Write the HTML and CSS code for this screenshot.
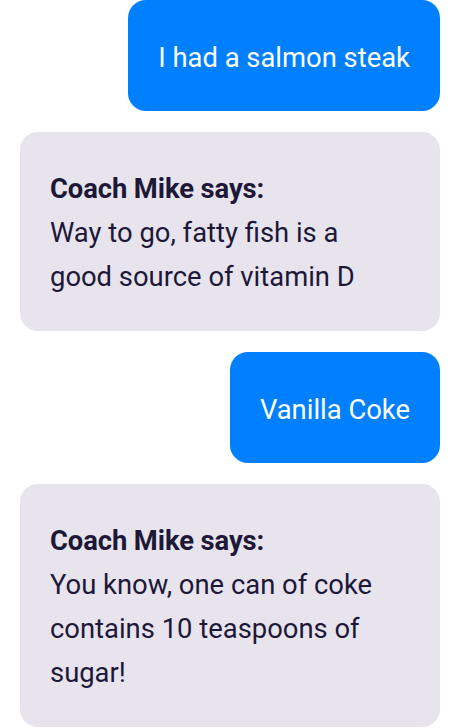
FILE: index.html
```html
<!DOCTYPE html>
<html>
<head>
<meta charset="utf-8">
<link rel="stylesheet" href="styles.css">
</head>
<body>
<div class="chat">
  <div class="msg user">I had a salmon steak</div>
  <div class="msg coach"><strong>Coach Mike says:</strong><br>Way to go, fatty fish is a good source of vitamin D</div>
  <div class="msg user">Vanilla Coke</div>
  <div class="msg coach"><strong>Coach Mike says:</strong><br>You know, one can of coke contains 10 teaspoons of sugar!</div>
</div>
</body>
</html>
```
FILE: styles.css
```css
html, body {
  margin: 0;
  padding: 0;
  background: #ffffff;
}
body {
  font-family: Roboto, "Noto Sans", sans-serif;
}
.chat {
  display: flex;
  flex-direction: column;
  align-items: flex-end;
  gap: 21px;
  padding: 0 20px;
}
.msg {
  box-sizing: border-box;
  border-radius: 18px;
  font-size: 27.4px;
  line-height: 44px;
}
.user {
  background: #0080ff;
  color: #ffffff;
  padding: 36px 30px 31px;
}
.coach {
  background: #e7e4ee;
  color: #1d1838;
  width: 420px;
  padding: 35px 40px 32px 30px;
}
.coach strong {
  font-weight: 700;
  letter-spacing: -0.1px;
}
```
